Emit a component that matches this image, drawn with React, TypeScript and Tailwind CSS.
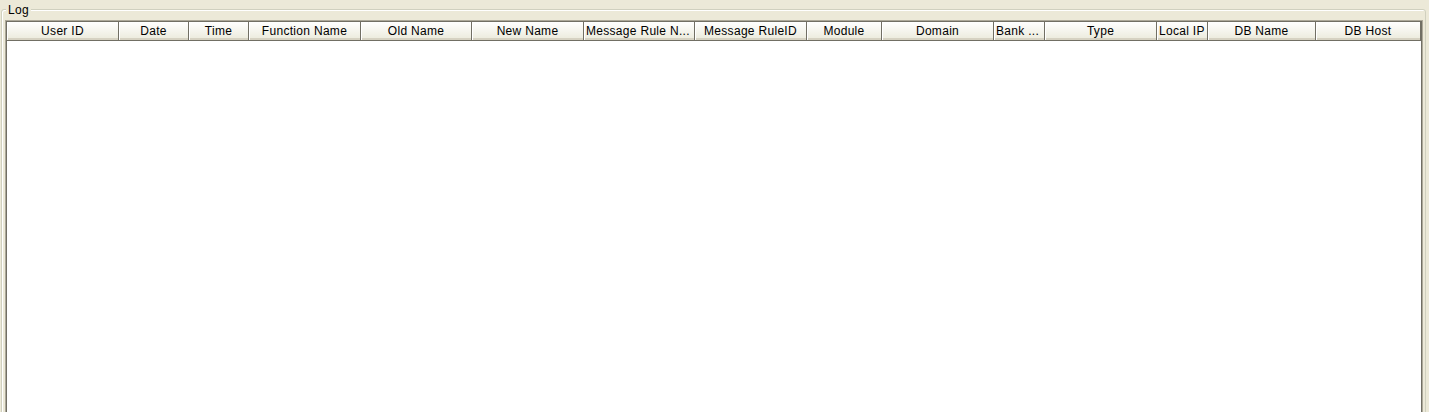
import React from "react";

const cols: { label: string; w: number; left?: boolean }[] = [
  { label: "User ID", w: 112 },
  { label: "Date", w: 70 },
  { label: "Time", w: 60 },
  { label: "Function Name", w: 112 },
  { label: "Old Name", w: 111 },
  { label: "New Name", w: 112 },
  { label: "Message Rule N...", w: 111, left: true },
  { label: "Message RuleID", w: 112 },
  { label: "Module", w: 75 },
  { label: "Domain", w: 112 },
  { label: "Bank ...", w: 51, left: true },
  { label: "Type", w: 112 },
  { label: "Local IP", w: 51, left: true },
  { label: "DB Name", w: 108 },
  { label: "DB Host", w: 105 },
];

export default function App() {
  return (
    <div
      className="w-[1429px] h-[412px] overflow-hidden bg-[#ece9d8] pt-[9px] pl-[1px] pr-[3px] text-black"
      style={{ fontFamily: '"Liberation Sans", Arial, sans-serif' }}
    >
      <div className="relative h-[420px] rounded-[3px] border border-[#d0d0bf] shadow-[inset_1px_1px_0_#ffffff] pt-[10px] pl-[3px] pr-[2px]">
        <div className="absolute left-[4px] top-[-7px] bg-[#ece9d8] px-[2px] text-[12px] leading-[14px] tracking-[0.3px]">
          Log
        </div>
        <div className="h-[400px] border border-[#aca899] bg-white">
          <div className="h-full border-l border-t border-r border-[#716f64] bg-white">
            <div className="flex h-[19px] border-b border-[#716f64] bg-gradient-to-b from-[#ffffff] to-[#ebeadb] shadow-[inset_0_-2px_0_#d6d2c2]">
              {cols.map((c, i) => (
                <div
                  key={i}
                  className={
                    c.left
                      ? "flex shrink-0 items-center justify-start pl-[2px] overflow-hidden whitespace-nowrap border-r border-[#716f64] shadow-[inset_1px_0_0_#ffffff] text-[12px] leading-[14px] pb-[1px] tracking-[0.3px]"
                      : "flex shrink-0 items-center justify-center overflow-hidden whitespace-nowrap border-r border-[#716f64] shadow-[inset_1px_0_0_#ffffff] text-[12px] leading-[14px] pb-[1px] tracking-[0.3px]"
                  }
                  style={{ width: c.w }}
                >
                  {c.label}
                </div>
              ))}
              <div className="flex-1" />
            </div>
          </div>
        </div>
      </div>
    </div>
  );
}
